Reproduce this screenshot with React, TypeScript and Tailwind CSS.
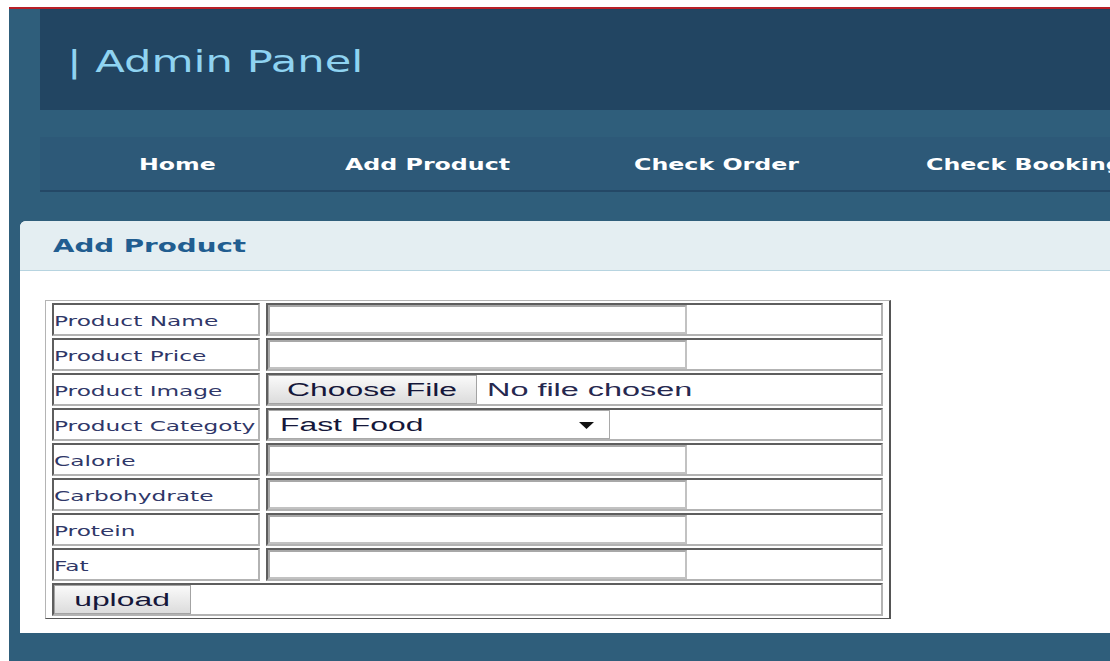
type Kind = 'text' | 'file' | 'select';

const fields: { label: string; kind: Kind }[] = [
  { label: 'Product Name', kind: 'text' },
  { label: 'Product Price', kind: 'text' },
  { label: 'Product Image', kind: 'file' },
  { label: 'Product Categoty', kind: 'select' },
  { label: 'Calorie', kind: 'text' },
  { label: 'Carbohydrate', kind: 'text' },
  { label: 'Protein', kind: 'text' },
  { label: 'Fat', kind: 'text' },
];

const menu = [
  { label: 'Home', w: 'w-[79px]' },
  { label: 'Add Product', w: 'w-[162px]' },
  { label: 'Check Order', w: 'w-[165px]' },
  { label: 'Check Booking', w: 'w-[212px]' },
];

const cell = 'h-[33px] p-0 border-2 border-t-[#5e5e5e] border-l-[#5e5e5e] border-b-[#b3b3b3] border-r-[#b3b3b3]';
const control = "font-['Liberation_Sans',Arial,sans-serif] text-[18px] leading-none text-[#15173a]";
const btn = 'flex h-[29px] items-center justify-center border border-[#a3a3a3] bg-linear-to-b from-[#fafafa] to-[#dcdcdc]';

// wide text: the glyphs are stretched sideways, layout box stays unscaled
function Wide({ text, cls }: { text: string; cls: string }) {
  return <span className={`inline-block whitespace-nowrap ${cls}`}>{text}</span>;
}

function Field({ kind }: { kind: Kind }) {
  if (kind === 'file') {
    return (
      <div className={`flex h-[29px] items-center ${control}`}>
        <div className={`${btn} w-[209px]`}>
          <Wide text="Choose File" cls="origin-center scale-x-[1.77]" />
        </div>
        <Wide text="No file chosen" cls="ml-[10px] origin-left scale-x-[1.8] text-[#26284f]" />
      </div>
    );
  }
  if (kind === 'select') {
    return (
      <div className={`flex h-[29px] w-[342px] items-center justify-between border border-[#a9a9a9] bg-white pl-[11px] pr-[15px] ${control}`}>
        <Wide text="Fast Food" cls="origin-left scale-x-[1.77]" />
        <svg width="15" height="7" viewBox="0 0 15 7" className="mt-[2px]">
          <polygon points="0,0 15,0 7.5,7" fill="#111" />
        </svg>
      </div>
    );
  }
  return <input type="text" className="block h-[29px] w-[419px] border-2 border-[#c2c2c2] border-t-[#a8a8a8] border-l-[#a8a8a8] bg-white outline-none" />;
}

export default function App() {
  return (
    <div className="h-[661px] w-full overflow-hidden bg-white pl-[9px] pt-[7px] font-['DejaVu_Sans',Verdana,sans-serif]">
      <div className="h-full border-t-2 border-[#b81f27] bg-[#2f5e7b]">
        <header className="ml-[31px] flex h-[101px] items-center bg-[#224562] pl-[27px] pt-[5px]">
          <Wide text="| Admin Panel" cls="origin-left scale-x-[1.44] text-[30px] leading-none text-[#8fd3f1]" />
        </header>

        <nav className="ml-[31px] mt-[27px] flex h-[55px] items-center gap-[127px] overflow-hidden border-b-2 border-[#244866] bg-[#2d5978] pl-[99px] pt-[3px]">
          {menu.map(item => (
            <a key={item.label} href="#" className={`${item.w} shrink-0 text-left text-[15px] font-bold leading-none text-white`}>
              <Wide text={item.label} cls="origin-left scale-x-[1.58]" />
            </a>
          ))}
        </nav>

        <section className="ml-[11px] mt-[29px] overflow-hidden rounded-tl-[6px] bg-white pb-[14px]">
          <div className="flex h-[50px] items-center border-b border-[#b7d4e0] bg-[#e4eef2] pl-[33px]">
            <Wide text="Add Product" cls="origin-left scale-x-[1.54] text-[18px] font-bold leading-none text-[#215d90]" />
          </div>

          <div className="pl-[25px] pt-[29px]">
            <table className="w-[846px] table-fixed border-separate border-spacing-x-[6px] border-spacing-y-[2px] border-t border-l border-b border-r-2 border-t-[#b4b4b4] border-l-[#b4b4b4] border-b-[#555] border-r-[#555]">
              <tbody>
                {fields.map(f => (
                  <tr key={f.label}>
                    <td className={`${cell} w-[208px] pt-[3px] text-[14px] leading-none text-[#2f3768]`}>
                      <Wide text={f.label} cls="origin-left scale-x-[1.66]" />
                    </td>
                    <td className={`${cell} w-[617px]`}>
                      <Field kind={f.kind} />
                    </td>
                  </tr>
                ))}
                <tr>
                  <td colSpan={2} className={cell}>
                    <button className={`${btn} ${control} w-[137px]`}>
                      <Wide text="upload" cls="origin-center scale-x-[1.77]" />
                    </button>
                  </td>
                </tr>
              </tbody>
            </table>
          </div>
        </section>
      </div>
    </div>
  );
}
